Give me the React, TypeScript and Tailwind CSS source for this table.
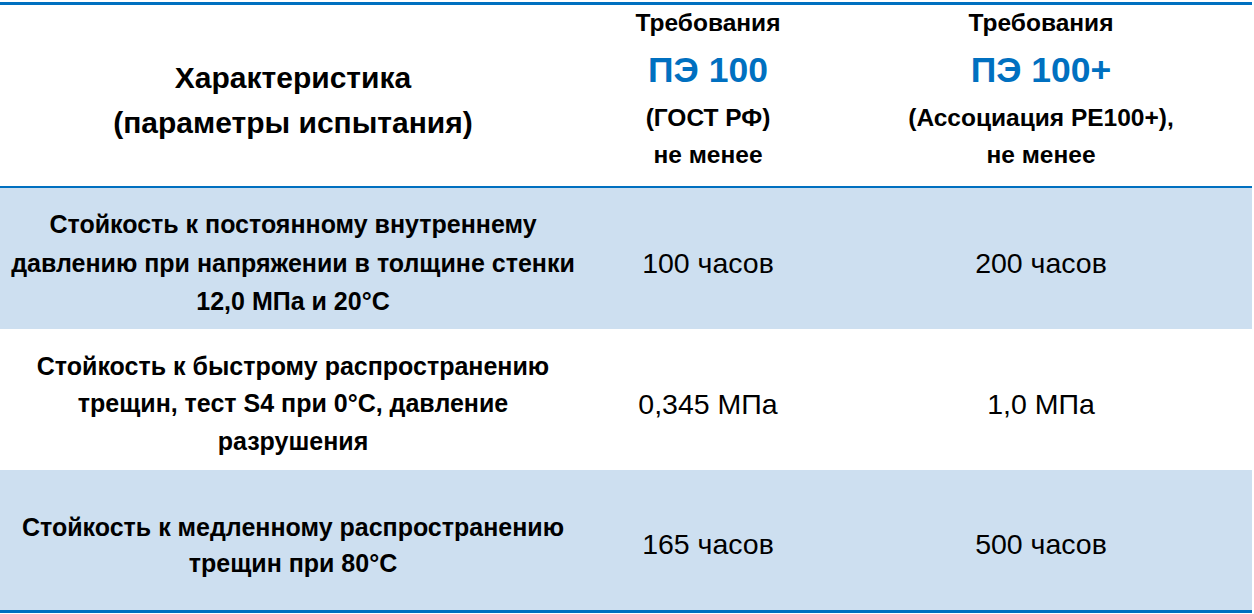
import React from "react";

const font = { fontFamily: '"Liberation Sans", Arial, sans-serif' };

function Row({
  bg,
  label,
  v1,
  v2,
  h,
  lh,
}: {
  bg: string;
  label: React.ReactNode;
  v1: string;
  v2: string;
  h: string;
  lh: string;
}) {
  return (
    <div className={`flex ${h} ${bg} pt-[9px]`}>
      <div className={`w-[586px] flex items-center justify-center text-center font-bold text-[25px] ${lh} text-black`}>
        <div>{label}</div>
      </div>
      <div className="w-[244px] flex items-center justify-center text-[28.5px] text-black">
        {v1}
      </div>
      <div className="flex-1 flex items-center justify-center text-[28.5px] text-black">
        {v2}
      </div>
    </div>
  );
}

export default function App() {
  return (
    <div className="w-[1254px] h-[614px] bg-white pt-[2px]" style={font}>
      <div className="w-[1252px] border-t-[3px] border-b-[3px] border-[#0070c0]">
        <div className="flex h-[183px] border-b-[2px] border-[#0070c0] bg-white">
          <div className="w-[586px] flex items-center justify-center text-center font-bold text-[30px] leading-[45px] pt-[9px]">
            <div>
              Характеристика
              <br />
              (параметры испытания)
            </div>
          </div>
          <div className="w-[244px] flex flex-col items-center text-center font-bold text-[24.5px] pt-0">
            <div className="leading-[36px]">Требования</div>
            <div className="leading-[58px] text-[35.5px] text-[#0070c0]">ПЭ 100</div>
            <div className="leading-[37px]">(ГОСТ РФ)</div>
            <div className="leading-[37px]">не менее</div>
          </div>
          <div className="flex-1 flex flex-col items-center text-center font-bold text-[24.5px] pt-0">
            <div className="leading-[36px]">Требования</div>
            <div className="leading-[58px] text-[35.5px] text-[#0070c0]">ПЭ 100+</div>
            <div className="leading-[37px]">(Ассоциация PE100+),</div>
            <div className="leading-[37px]">не менее</div>
          </div>
        </div>
        <Row
          bg="bg-[#cddff0]"
          h="h-[141px]"
          lh="leading-[38.5px]"
          label={
            <>
              Стойкость к постоянному внутреннему
              <br />
              давлению при напряжении в толщине стенки
              <br />
              12,0 МПа и 20°С
            </>
          }
          v1="100 часов"
          v2="200 часов"
        />
        <Row
          bg="bg-white"
          h="h-[141px]"
          lh="leading-[37.5px]"
          label={
            <>
              Стойкость к быстрому распространению
              <br />
              трещин, тест S4 при 0°С, давление
              <br />
              разрушения
            </>
          }
          v1="0,345 МПа"
          v2="1,0 МПа"
        />
        <Row
          bg="bg-[#cddff0]"
          h="h-[140px]"
          lh="leading-[36px]"
          label={
            <>
              Стойкость к медленному распространению
              <br />
              трещин при 80°С
            </>
          }
          v1="165 часов"
          v2="500 часов"
        />
      </div>
    </div>
  );
}
